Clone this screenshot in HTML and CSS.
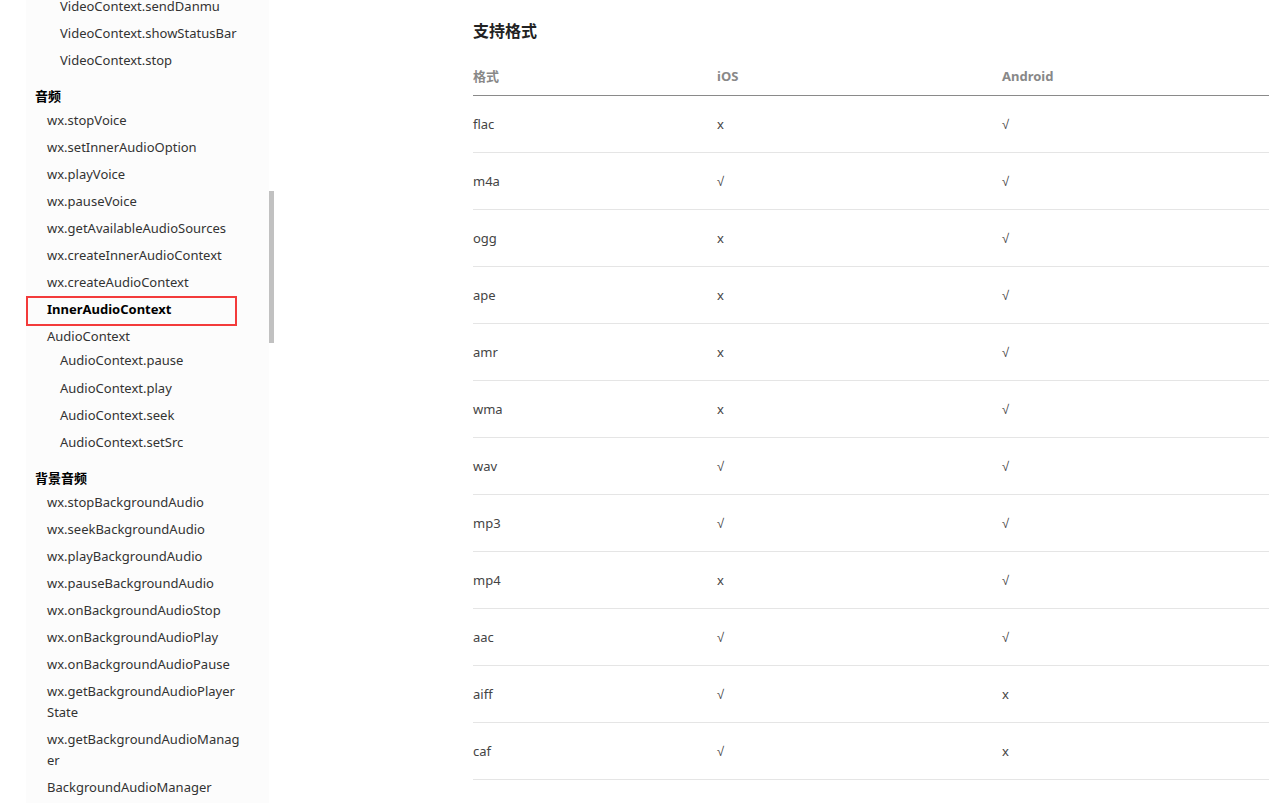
FILE: index.html
```html
<!DOCTYPE html>
<html lang="zh-CN">
<head>
  <meta charset="UTF-8" />
  <meta name="viewport" content="width=device-width, initial-scale=1.0" />
  <title>InnerAudioContext</title>
  <link rel="stylesheet" href="styles.css">
</head>
<body>
  <div class="page">
    <div class="gutter"></div>

    <nav class="sidebar">
      <ul class="nav-list sub top">
        <li><a>VideoContext.sendDanmu</a></li>
        <li><a>VideoContext.showStatusBar</a></li>
        <li><a>VideoContext.stop</a></li>
      </ul>

      <div class="nav-group">音频</div>
      <ul class="nav-list">
        <li><a>wx.stopVoice</a></li>
        <li><a>wx.setInnerAudioOption</a></li>
        <li><a>wx.playVoice</a></li>
        <li><a>wx.pauseVoice</a></li>
        <li><a>wx.getAvailableAudioSources</a></li>
        <li><a>wx.createInnerAudioContext</a></li>
        <li><a>wx.createAudioContext</a></li>
        <li><a class="active">InnerAudioContext</a></li>
        <li>
          <a>AudioContext</a>
          <ul class="nav-list sub">
            <li><a>AudioContext.pause</a></li>
            <li><a>AudioContext.play</a></li>
            <li><a>AudioContext.seek</a></li>
            <li><a>AudioContext.setSrc</a></li>
          </ul>
        </li>
      </ul>

      <div class="nav-group">背景音频</div>
      <ul class="nav-list">
        <li><a>wx.stopBackgroundAudio</a></li>
        <li><a>wx.seekBackgroundAudio</a></li>
        <li><a>wx.playBackgroundAudio</a></li>
        <li><a>wx.pauseBackgroundAudio</a></li>
        <li><a>wx.onBackgroundAudioStop</a></li>
        <li><a>wx.onBackgroundAudioPlay</a></li>
        <li><a>wx.onBackgroundAudioPause</a></li>
        <li><a>wx.getBackgroundAudioPlayerState</a></li>
        <li><a>wx.getBackgroundAudioManager</a></li>
        <li><a>BackgroundAudioManager</a></li>
      </ul>
    </nav>

    <div class="scroll-track"><div class="scroll-thumb"></div></div>

    <main class="content">
      <h3 class="section-title">支持格式</h3>
      <table class="format-table">
        <thead>
          <tr>
            <th class="col-fmt">格式</th>
            <th class="col-ios">iOS</th>
            <th>Android</th>
          </tr>
        </thead>
        <tbody>
          <tr><td>flac</td><td>x</td><td class="yes">√</td></tr>
          <tr><td>m4a</td><td class="yes">√</td><td class="yes">√</td></tr>
          <tr><td>ogg</td><td>x</td><td class="yes">√</td></tr>
          <tr><td>ape</td><td>x</td><td class="yes">√</td></tr>
          <tr><td>amr</td><td>x</td><td class="yes">√</td></tr>
          <tr><td>wma</td><td>x</td><td class="yes">√</td></tr>
          <tr><td>wav</td><td class="yes">√</td><td class="yes">√</td></tr>
          <tr><td>mp3</td><td class="yes">√</td><td class="yes">√</td></tr>
          <tr><td>mp4</td><td>x</td><td class="yes">√</td></tr>
          <tr><td>aac</td><td class="yes">√</td><td class="yes">√</td></tr>
          <tr><td>aiff</td><td class="yes">√</td><td>x</td></tr>
          <tr><td>caf</td><td class="yes">√</td><td>x</td></tr>
        </tbody>
      </table>
    </main>
  </div>
</body>
</html>
```

FILE: styles.css
```css
html, body {
  margin: 0;
  height: 100%;
  overflow: hidden;
}
body {
  font-family: "Noto Sans", "Noto Sans CJK SC", sans-serif;
  color: #333;
  background: #fff;
}
.page {
  display: flex;
  height: 803px;
}
.gutter {
  width: 26px;
  flex: none;
}

/* sidebar */
.sidebar {
  width: 206px;
  flex: none;
  padding: 0 28px 0 9px;
  background: #fcfcfc;
  overflow: hidden;
  font-size: 13px;
  line-height: 21px;
}
.nav-list {
  list-style: none;
  margin: 0;
  padding: 0 0 0 12px;
}
.nav-list.sub {
  padding-left: 13px;
}
.nav-list.top {
  margin-top: -10px;
  padding-left: 25px;
}
.nav-list li {
  padding-top: 6.05px;
}
.nav-list li:first-child {
  padding-top: 3px;
}
.nav-list.top li:first-child {
  padding-top: 6px;
}
.nav-list a {
  display: block;
  color: #333;
  word-break: break-all;
}
.nav-list a.active {
  position: relative;
  font-weight: bold;
  color: #000;
}
.nav-list a.active::after {
  content: "";
  position: absolute;
  left: -21px;
  top: -3px;
  width: 207px;
  height: 26px;
  border: 2px solid #f33b3b;
}
.nav-group {
  margin-top: 15px;
  font-weight: bold;
  color: #000;
}
.scroll-track {
  width: 5px;
  flex: none;
}
.scroll-thumb {
  margin-top: 191px;
  height: 152px;
  background: #c1c1c1;
}

/* content */
.content {
  flex: 1;
  min-width: 0;
  padding-left: 199px;
}
.section-title {
  margin: 19px 0 0;
  font-size: 16px;
  line-height: 24px;
  font-weight: bold;
  color: #222;
}
.format-table {
  width: 100%;
  border-collapse: collapse;
  font-size: 13px;
  line-height: 21px;
}
.format-table th {
  text-align: left;
  font-weight: bold;
  color: #888;
  padding: 23px 0 8px;
  border-bottom: 1px solid #8a8a8a;
}
.format-table .col-fmt {
  width: 244px;
}
.format-table .col-ios {
  width: 285px;
}
.format-table td {
  padding: 18px 0 17px;
  border-bottom: 1px solid #e5e5e5;
  color: #444;
}
.format-table td.yes {
  font-family: "Liberation Sans", sans-serif;
}
```
